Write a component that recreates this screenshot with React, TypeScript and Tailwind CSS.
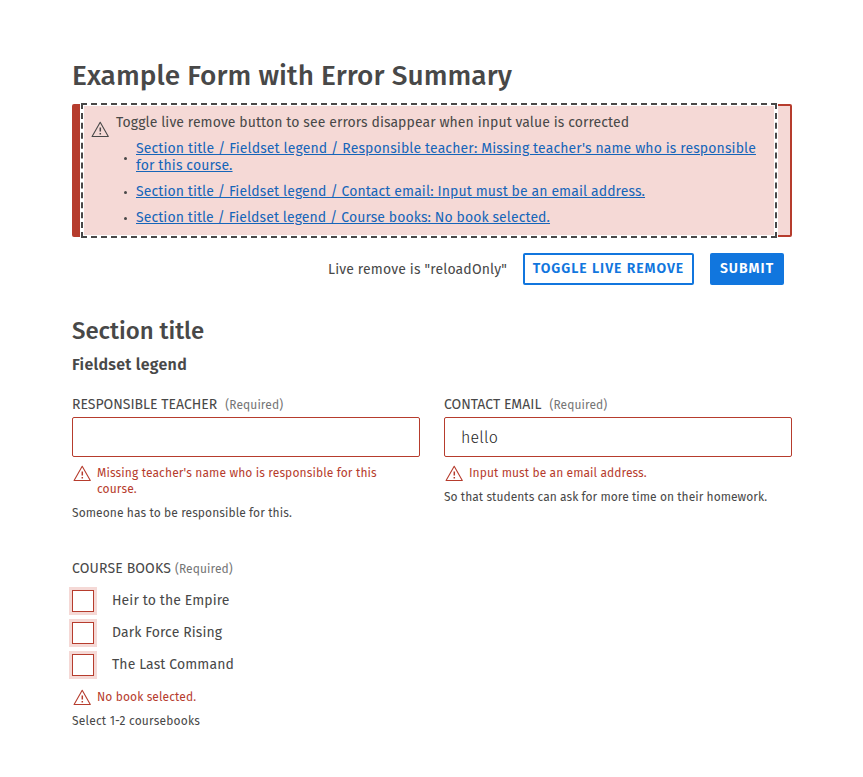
import React from "react";

function Warning({ className = "" }: { className?: string }) {
  return (
    <svg
      viewBox="0 0 18 18"
      className={`h-[18px] w-[18px] shrink-0 ${className}`}
      fill="none"
      stroke="currentColor"
      strokeWidth="1.1"
      strokeLinejoin="round"
    >
      <path d="M9.2 1.3 17.3 15.5H1.1Z" />
      <path d="M9.3 6.4v4.1M9.3 12v1.5" strokeWidth="1.5" />
    </svg>
  );
}

function ErrorText({ children, className = "tracking-[0.1px]" }: { children: React.ReactNode; className?: string }) {
  return (
    <div className="flex text-[12px] leading-4 text-[#b63c2d]">
      <Warning className="-mb-[2px] ml-px mr-[6px]" />
      <p className={`pr-6 ${className}`}>{children}</p>
    </div>
  );
}

function Field({ label, value, error, help }: { label: string; value: string; error: string; help: string }) {
  return (
    <div className="w-[348px]">
      <label className="flex h-6 items-center pb-px text-[14px] uppercase">
        {label}
        <span className="ml-2 pt-px text-[12px] normal-case tracking-[0.1px] text-[#757575]">(Required)</span>
      </label>
      <input
        className="mb-2 block h-10 w-full rounded-[2px] border border-[#b63c2d] bg-white px-4 text-[16px] font-light tracking-[0.2px] text-[#1d1d1d] outline-none"
        defaultValue={value}
      />
      <ErrorText className={value ? "tracking-[0.08px]" : "tracking-[0.125px]"}>{error}</ErrorText>
      <p className={`mt-2 text-[12px] leading-4 ${value ? "tracking-[0.04px]" : "tracking-[0.09px]"}`}>{help}</p>
    </div>
  );
}

const summary = [
  "Section title / Fieldset legend / Responsible teacher: Missing teacher's name who is responsible for this course.",
  "Section title / Fieldset legend / Contact email: Input must be an email address.",
  "Section title / Fieldset legend / Course books: No book selected.",
];

const summaryTracking = ["tracking-[0.12px]", "tracking-[0.098px]", "tracking-[0.088px]"];

const books = ["Heir to the Empire", "Dark Force Rising", "The Last Command"];

export default function App() {
  return (
    <main className="h-[777px] w-[863px] bg-white px-[72px] pt-[58px] font-['Fira_Sans','Noto_Sans',sans-serif] text-[14px] text-[#484848]">
      <div className="w-[720px]">
        <h1 className="h-[46px] text-[28px] font-medium leading-9 tracking-[0.07px]">Example Form with Error Summary</h1>

        <section className="h-[133px] rounded-[2px] border-2 border-l-8 border-[#b63c2d] bg-[#f5d9d6]">
          <div className="ml-1 mr-4 flex h-[129px] bg-[#f5d9d6] pl-[7px] shadow-[0_0_0_4px_#fff] outline-2 outline-offset-1 outline-dashed outline-[#484848]">
            <Warning className="mt-[15px] mr-[7px]" />
            <div className="pt-2">
              <p className="leading-[17px] tracking-[0.085px]">Toggle live remove button to see errors disappear when input value is corrected</p>
              <ul className="mt-[9px] flex flex-col gap-[9px]">
                {summary.map((s, i) => (
                  <li key={s} className="flex items-center pl-2">
                    <span className="mr-[9px] mt-[2px] h-[3px] w-[3px] shrink-0 rounded-full bg-[#484848]" />
                    <a href="#form" className={`block leading-[17px] text-[#1665b9] underline ${summaryTracking[i]}`}>{s}</a>
                  </li>
                ))}
              </ul>
            </div>
          </div>
        </section>

        <div className="mt-4 flex items-center justify-end gap-4 pr-2">
          <span className="tracking-[0.156px]">Live remove is "reloadOnly"</span>
          <button className="h-8 w-[171px] whitespace-nowrap rounded-[2px] border-2 border-[#1176de] pb-[2px] text-[14px] font-semibold uppercase tracking-[0.95px] text-[#1176de]">Toggle live remove</button>
          <button className="h-8 w-[74px] rounded-[2px] bg-[#1176de] pb-[2px] text-[14px] font-semibold uppercase tracking-[1px] text-white">Submit</button>
        </div>

        <h2 className="mt-[30px] text-[24px] font-medium leading-8 tracking-[-0.03px]">Section title</h2>
        <h3 className="mt-[6px] text-[16px] font-semibold leading-6 tracking-[0.275px]">Fieldset legend</h3>

        <form id="form" className="mt-4 flex gap-6">
          <Field label="Responsible teacher" value="" error="Missing teacher's name who is responsible for this course." help="Someone has to be responsible for this." />
          <Field label="Contact email" value="hello" error="Input must be an email address." help="So that students can ask for more time on their homework." />
        </form>

        <fieldset className="mt-9">
          <legend className="flex h-6 items-center pb-[2px] text-[14px] uppercase tracking-[0.13px]">
            Course books<span className="ml-1 pt-px text-[12px] normal-case tracking-[0.1px] text-[#757575]">(Required)</span>
          </legend>
          <div className="mb-[13px] mt-[9px] flex flex-col gap-[10px]">
            {books.map((b) => (
              <label key={b} className="flex h-[22px] items-center gap-[18px] tracking-[0.1px]">
                <span className="h-[22px] w-[22px] border border-[#b63c2d] bg-white shadow-[0_0_0_3px_#f5d9d6]" />
                <span className="pb-[2px]">{b}</span>
              </label>
            ))}
          </div>
          <ErrorText>No book selected.</ErrorText>
          <p className="mt-2 text-[12px] leading-4 tracking-[0.2px]">Select 1-2 coursebooks</p>
        </fieldset>
      </div>
    </main>
  );
}
